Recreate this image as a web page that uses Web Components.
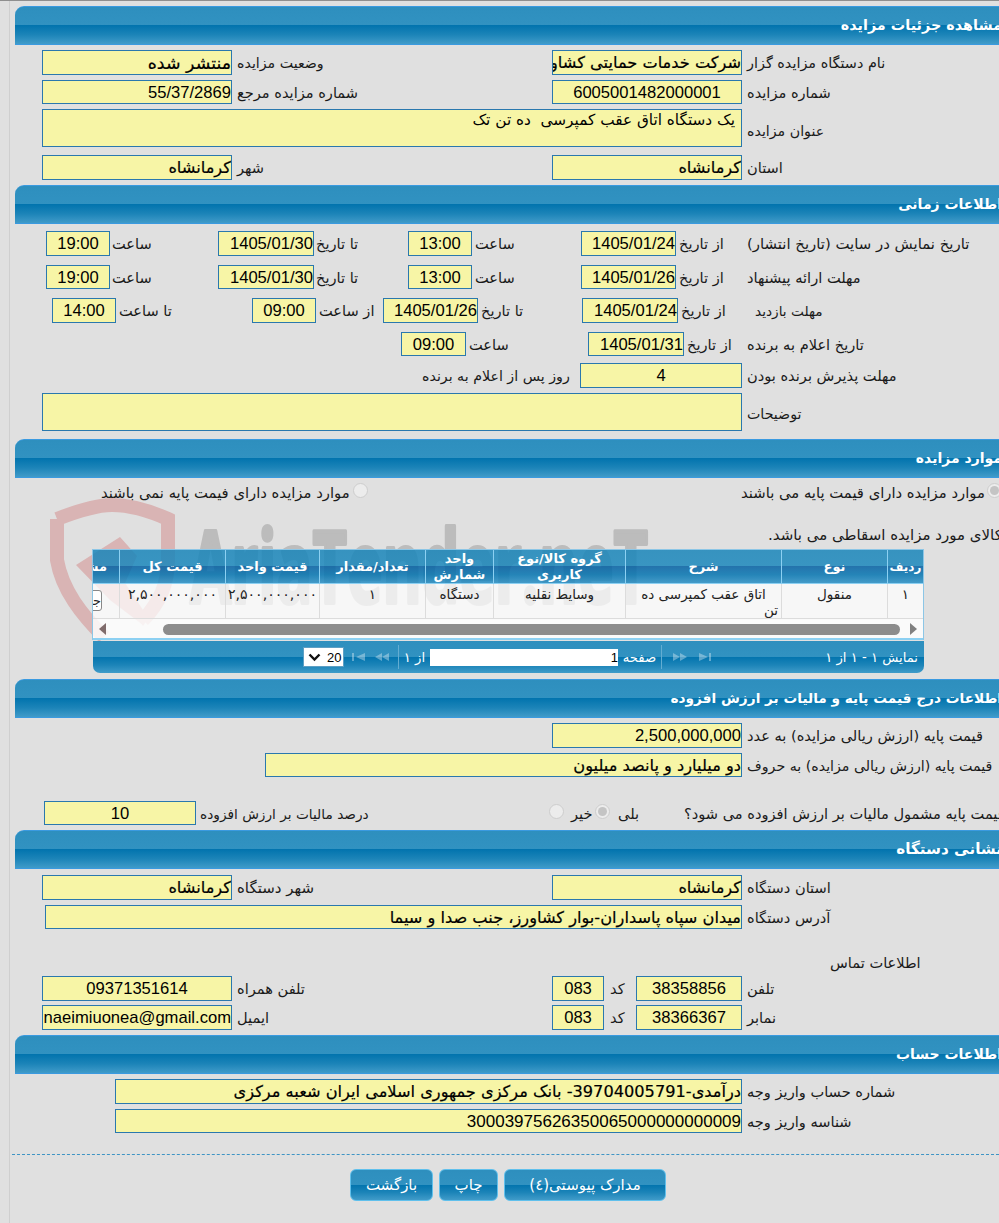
<!DOCTYPE html>
<html lang="fa">
<head>
<meta charset="utf-8">
<title>مشاهده جزئیات مزایده</title>
<style>
html,body{margin:0;padding:0;background:#e0e0e0;overflow:hidden;height:1223px}
body{font:14px "DejaVu Sans","Liberation Sans",sans-serif;color:#1a1a1a}
</style>
</head>
<body>
<x-page>
  <x-watermark slot="back"></x-watermark>

  <x-section title="مشاهده جزئیات مزایده" style="--ts:14.4px">
    <x-row top="5" h="25" pad="42">
      <x-input w="190" class="fa" style="font-size:17.4px">منتشر شده</x-input><x-label w="320" style="font-size:14.2px">وضعیت مزایده</x-label>
      <x-input w="190" class="fa">شرکت خدمات حمایتی کشاورزی</x-input><x-label w="320" style="font-size:14.4px">نام دستگاه مزایده گزار</x-label>
    </x-row>
    <x-row top="5" h="24" pad="42">
      <x-input w="190">55/37/2869</x-input><x-label w="320">شماره مزایده مرجع</x-label>
      <x-input w="190" center>6005001482000001</x-input><x-label w="320">شماره مزایده</x-label>
    </x-row>
    <x-row top="5" h="38" pad="42">
      <x-input w="700" area>یک دستگاه اتاق عقب کمپرسی  ده تن تک</x-input><x-label w="320" style="line-height:44px;font-size:14.2px">عنوان مزایده</x-label>
    </x-row>
    <x-row top="8" h="25" pad="42">
      <x-input w="190" class="fa">کرمانشاه</x-input><x-label w="320">شهر</x-label>
      <x-input w="190" class="fa">کرمانشاه</x-input><x-label w="320">استان</x-label>
    </x-row>
  </x-section>

  <x-section title="اطلاعات زمانی" style="--after:8px">
    <x-row top="7" h="25" pad="46">
      <x-input w="64" center>19:00</x-input><x-label w="108" gap="2">ساعت</x-label>
      <x-input w="96">1405/01/30</x-input><x-label w="94" gap="2">تا تاریخ</x-label>
      <x-input w="64" center>13:00</x-input><x-label w="109" gap="3">ساعت</x-label>
      <x-input w="95">1405/01/24</x-input><x-label w="71" gap="3">از تاریخ</x-label>
      <x-label w="320" gap="0" style="font-size:14.9px">تاریخ نمایش در سایت (تاریخ انتشار)</x-label>
    </x-row>
    <x-row top="9" h="24" pad="46">
      <x-input w="64" center>19:00</x-input><x-label w="108" gap="2">ساعت</x-label>
      <x-input w="96">1405/01/30</x-input><x-label w="94" gap="2">تا تاریخ</x-label>
      <x-input w="64" center>13:00</x-input><x-label w="109" gap="3">ساعت</x-label>
      <x-input w="95">1405/01/26</x-input><x-label w="71" gap="3">از تاریخ</x-label>
      <x-label w="320" gap="0">مهلت ارائه پیشنهاد</x-label>
    </x-row>
    <x-row top="9" h="25" pad="52">
      <x-input w="64" center>14:00</x-input><x-label w="136" gap="3">تا ساعت</x-label>
      <x-input w="64" center>09:00</x-input><x-label w="67" gap="3">از ساعت</x-label>
      <x-input w="95">1405/01/26</x-input><x-label w="104" gap="3">تا تاریخ</x-label>
      <x-input w="96">1405/01/24</x-input><x-label w="73" gap="3">از تاریخ</x-label>
      <x-label w="320" gap="4" style="font-size:13.7px">مهلت بازدید</x-label>
    </x-row>
    <x-row top="9" h="24" pad="401">
      <x-input w="65" center>09:00</x-input><x-label w="122" gap="3">ساعت</x-label>
      <x-input w="96">1405/01/31</x-input><x-label w="63" gap="3">از تاریخ</x-label>
      <x-label w="320" gap="0">تاریخ اعلام به برنده</x-label>
    </x-row>
    <x-row top="7" h="25" pad="422">
      <x-label w="158" gap="0" style="font-size:14.2px">روز پس از اعلام به برنده</x-label>
      <x-input w="162" center>4</x-input><x-label w="320">مهلت پذیرش برنده بودن</x-label>
    </x-row>
    <x-row top="5" h="38" pad="42">
      <x-input w="700" area></x-input><x-label w="320" style="line-height:42px;font-size:14.2px">توضیحات</x-label>
    </x-row>
  </x-section>

  <x-section title="موارد مزایده" style="--after:6px">
    <x-row top="3" h="20" pad="101">
      <x-label w="252" gap="0" style="font-size:14.8px;line-height:24px">موارد مزایده دارای فیمت پایه نمی باشند</x-label><x-radio style="margin-top:2px"></x-radio>
      <x-label w="373" gap="0"></x-label>
      <x-label w="246" gap="0" style="font-size:14.8px;line-height:24px">موارد مزایده دارای قیمت پایه می باشند</x-label><x-radio checked style="margin-top:2px"></x-radio>
    </x-row>
    <x-row top="22" h="24" pad="768">
      <x-label w="300" gap="0" style="font-size:15px;line-height:24px">کالای مورد مزایده اسقاطی می باشد.</x-label>
    </x-row>
    <x-grid></x-grid>
  </x-section>

  <x-section title="اطلاعات درج قیمت پایه و مالیات بر ارزش افزوده" style="--ts:13.7px">
    <x-row top="5" h="25" pad="552">
      <x-input w="190">2,500,000,000</x-input><x-label w="320">قیمت پایه (ارزش ریالی مزایده) به عدد</x-label>
    </x-row>
    <x-row top="5" h="24" pad="265">
      <x-input w="477" class="fa">دو میلیارد و پانصد میلیون</x-input><x-label w="320" style="font-size:14.2px">قیمت پایه (ارزش ریالی مزایده) به حروف</x-label>
    </x-row>
    <x-row top="24" h="24" pad="44">
      <x-input w="152" center>10</x-input><x-label w="353" gap="4" style="font-size:13.7px">درصد مالیات بر ارزش افزوده</x-label>
      <x-radio style="margin-top:3px"></x-radio><x-label w="31" gap="7">خیر</x-label><x-radio checked style="margin-top:3px"></x-radio>
      <x-label w="74" gap="8">بلی</x-label>
      <x-label w="330" gap="0">قیمت پایه مشمول مالیات بر ارزش افزوده می شود؟</x-label>
    </x-row>
  </x-section>

  <x-section title="نشانی دستگاه" style="--ts:15.200px">
    <x-row top="6" h="25" pad="42">
      <x-input w="190" class="fa">کرمانشاه</x-input><x-label w="320" style="font-size:15px">شهر دستگاه</x-label>
      <x-input w="190" class="fa">کرمانشاه</x-input><x-label w="320">استان دستگاه</x-label>
    </x-row>
    <x-row top="5" h="24" pad="45">
      <x-input w="697" class="fa">میدان سپاه پاسداران-بوار کشاورز، جنب صدا و سیما</x-input><x-label w="320">آدرس دستگاه</x-label>
    </x-row>
    <x-row top="21" h="26" pad="830">
      <x-label w="92" gap="0">اطلاعات تماس</x-label>
    </x-row>
    <x-row top="0" h="25" pad="42">
      <x-input w="190" center>09371351614</x-input><x-label w="320">تلفن همراه</x-label>
      <x-input w="52" center>083</x-input><x-label w="32" gap="6">کد</x-label>
      <x-input w="106" center>38358856</x-input><x-label w="320">تلفن</x-label>
    </x-row>
    <x-row top="4" h="25" pad="42">
      <x-input w="190">naeimiuonea@gmail.com</x-input><x-label w="320">ایمیل</x-label>
      <x-input w="52" center>083</x-input><x-label w="32" gap="6">کد</x-label>
      <x-input w="106" center>38366367</x-input><x-label w="320">نمابر</x-label>
    </x-row>
  </x-section>

  <x-section title="اطلاعات حساب">
    <x-row top="5" h="25" pad="115">
      <x-input w="627" class="fa">درآمدی-39704005791- بانک مرکزی جمهوری اسلامی ایران شعبه مرکزی</x-input><x-label w="320">شماره حساب واریز وجه</x-label>
    </x-row>
    <x-row top="5" h="24" pad="115">
      <x-input w="627" style="font-size:17px">30003975626350065000000000009</x-input><x-label w="320">شناسه واریز وجه</x-label>
    </x-row>
  </x-section>

  <x-actions>
    <x-btn w="83">بازگشت</x-btn>
    <x-btn w="59">چاپ</x-btn>
    <x-btn w="162">مدارک پیوستی(٤)</x-btn>
  </x-actions>
</x-page>

<script>
const GRAD='linear-gradient(#2e8fbe 0,#3192c1 49%,#0274ae 50%,#1c84b8 75%,#409bc9 100%)';
const GRADA='linear-gradient(rgba(22,132,185,.84) 0,rgba(25,135,188,.84) 49%,rgba(0,95,163,.84) 50%,rgba(1,115,176,.84) 75%,rgba(38,142,196,.84) 100%)';
function tpl(css,html){const t=document.createElement('template');t.innerHTML='<style>'+css+'</style>'+html;return t;}
function def(name,css,html,setup){
  const t=tpl(css,html);
  customElements.define(name,class extends HTMLElement{
    constructor(){super();this.attachShadow({mode:'open'}).appendChild(t.content.cloneNode(true));}
    connectedCallback(){if(setup)setup.call(this,this.shadowRoot);}
  });
}
def('x-page',`
  :host{display:block;position:relative;width:999px;height:1223px;overflow:hidden;background:#e0e0e0;border-top:1px solid #8f8f8f;box-sizing:border-box;padding-top:5px}
  .rule{position:absolute;left:9px;top:0;bottom:0;width:1px;background:#cfcfcf}
  .main{position:relative;z-index:1}
`,`<div class="rule"></div><slot name="back"></slot><div class="main"><slot></slot></div>`);

def('x-watermark',`
  :host{position:absolute;left:0;top:-1px;width:999px;height:1223px;z-index:0}
  svg{position:absolute;left:0;top:0}
  text{font:bold 100px "Open Sans","Liberation Sans",sans-serif;fill:#bcbcbc;stroke:#bcbcbc;stroke-width:4;stroke-linejoin:round}
`,`<svg width="999" height="1223" viewBox="0 0 999 1223">
  <path d="M57 519C80 510 98 505 112 505C128 505 150 511 168 519L168 560C168 585 158 605 143 620" fill="none" stroke="#d9b4b4" stroke-width="14"/>
  <path d="M57 519L57 560C62 590 82 615 104 637" fill="none" stroke="#d9b4b4" stroke-width="14"/>
  <path d="M76 565L120 537L137 556L122 590L143 625L110 600Z" fill="#d9b4b4"/>
  <path d="M125 583L143 610L160 585L167 590L143 626L120 590Z" fill="#d9b4b4"/>
  <text x="190" y="603" textLength="458" lengthAdjust="spacingAndGlyphs" dir="ltr">AriaTender.neT</text>
</svg>`);

def('x-section',`
  :host{display:block;width:1010px;padding-bottom:var(--after,5px);margin-left:15px}
  .h{height:39px;box-sizing:border-box;background:${GRAD};border-top:1px solid #3a9ae0;border-bottom:1px solid #3a9ae0;border-top-left-radius:9px;width:990px;overflow:hidden;color:#fff;font:bold var(--ts,14px) "DejaVu Sans",sans-serif;direction:rtl;text-align:right;padding:8px 3px 0 0;line-height:20px;white-space:nowrap}
  .b{margin-left:-15px}
`,`<div class="h"></div><div class="b"><slot></slot></div>`,function(r){r.querySelector('.h').textContent=this.getAttribute('title');});

def('x-row',`
  :host{display:flex;flex-direction:row;direction:ltr;align-items:stretch;width:1300px}
`,`<slot></slot>`,function(){
  this.style.marginTop=(this.getAttribute('top')||0)+'px';
  this.style.height=(this.getAttribute('h')||25)+'px';
  this.style.paddingLeft=(this.getAttribute('pad')||0)+'px';
});

def('x-input',`
  :host{display:block;flex:none;box-sizing:border-box;background:#f7f5a6;border:1px solid #2a78ae;font:16.6px "Liberation Sans","DejaVu Sans",sans-serif;color:#000;overflow:hidden}
  :host(.fa){font:16.2px "DejaVu Sans",sans-serif;-webkit-text-stroke:.2px #000}
  .t{display:block;direction:rtl;text-align:right;white-space:pre;line-height:24px;padding-right:0}
  :host([center]) .t{text-align:center;direction:ltr}
  :host([area]) .t{font:15.3px "DejaVu Sans",sans-serif;line-height:20px;padding-right:6px}
`,`<span class="t"><slot></slot></span>`,function(){this.style.width=this.getAttribute('w')+'px';});

def('x-label',`
  :host{display:block;flex:none;box-sizing:border-box;direction:rtl;text-align:left;white-space:nowrap;font:14.6px "DejaVu Sans",sans-serif;color:#1a1a1a;line-height:26px}
`,`<slot></slot>`,function(){
  this.style.width=this.getAttribute('w')+'px';
  const g=this.getAttribute('gap');this.style.paddingLeft=(g===null?5:g)+'px';
});

def('x-radio',`
  :host{display:block;flex:none;width:15px;height:15px;box-sizing:border-box;border:1px solid #cdcdcd;border-radius:50%;background:#ececec;position:relative}
  :host([checked])::after{content:"";position:absolute;inset:2px;border-radius:50%;background:#c4c4c4}
`,``);

def('x-grid',`
  :host{display:block;margin:2px 0 0 92px;width:832px;position:relative;font:13.5px "DejaVu Sans",sans-serif;color:#222}
  .box{border:1px solid #8cc6e6;border-bottom:0;overflow:hidden;box-sizing:border-box;width:832px}
  .g{display:grid;direction:rtl;grid-template-columns:36px 106px 156px 132px 68px 106px 94px 106px 26px}
  .hd{background:${GRADA};height:34px;color:#fff;font-weight:bold;font-size:13px;border-bottom:1px solid #8cd0f2;box-sizing:border-box;grid-template-rows:33px}
  .hd>div{border-left:1px solid #8cd0f2;display:flex;align-items:center;justify-content:center;text-align:center;line-height:16px;overflow:hidden;white-space:nowrap}
  .hd>div.w{white-space:normal}
  .hd>div.s{font-size:12px}
  .hd>div:last-child{border-left:0;justify-content:flex-start;padding-right:12px;margin-left:-1px}
  .rw{height:35px;background:rgba(255,255,255,.72);border-bottom:1px solid #dcdcdc;box-sizing:border-box;grid-template-rows:34px}
  .rw>div{border-left:1px solid #dcdcdc;text-align:center;padding-top:1px;line-height:18px;overflow:hidden}
  .rw>div:last-child{border-left:0}
  .rw>div.num{white-space:nowrap;font-size:14.1px}
  .end{display:block;text-align:right;padding-right:3px;line-height:15px}
  .sb{height:21px;background:rgba(255,255,255,.82);position:relative;border-bottom:2px solid #8cd0f2;box-sizing:border-box;display:flex;align-items:center;justify-content:space-between;padding:0 6px}
  .thumb{position:absolute;left:70px;top:5px;width:737px;height:11px;border-radius:6px;background:#8c8c8c}
  .tri{width:0;height:0;border-top:6.5px solid transparent;border-bottom:6.5px solid transparent}
  .tri.l{border-right:7px solid #7f6b6b}
  .tri.r{border-left:7px solid #808080}
  .clip{width:10px;overflow:hidden;height:21px;margin-top:5px;position:relative;margin-left:-1px}
  .clip span{position:absolute;right:0;top:0;width:28px;height:21px;box-sizing:border-box;border:1px solid #888;border-radius:3px;background:#fff;direction:rtl;line-height:19px;font-size:13px}
  .pg{margin:1px 0 0 1px;height:32px;width:831px;box-sizing:border-box;background:${GRAD};border-radius:0 0 7px 7px;color:#fff;display:flex;direction:rtl;align-items:center;font-size:13.2px}
  .sum{width:213px;padding-right:6px;box-sizing:border-box;white-space:nowrap;flex:none}
  .sep{width:1px;height:24px;background:#63add2;flex:none}
  .ic{opacity:.35;flex:none;display:block}
  .pl{flex:none;text-align:center}
  .in{flex:none;width:188px;height:17px;background:#fff;color:#000;font:13px "Liberation Sans",sans-serif;line-height:18px;text-align:right;direction:rtl}
  .sel{flex:none;width:41px;height:20px;background:#fff;border:1px solid #5d9fc4;box-sizing:border-box;color:#000;display:flex;direction:ltr;align-items:center;gap:6px;padding-left:4px;font:13px "Liberation Sans",sans-serif}
`,`<div class="box">
  <div class="g hd">
    <div class="s">ردیف</div><div>نوع</div><div>شرح</div><div class="w">گروه کالا/نوع کاربری</div><div class="w">واحد شمارش</div><div>تعداد/مقدار</div><div>قیمت واحد</div><div>قیمت کل</div><div>مشاهده</div>
  </div>
  <div class="g rw">
    <div>۱</div><div>منقول</div><div>اتاق عقب کمپرسی ده<span class="end">تن</span></div><div>وسایط نقلیه</div><div>دستگاه</div><div>۱</div><div class="num">۲,۵۰۰,۰۰۰,۰۰۰</div><div class="num">۲,۵۰۰,۰۰۰,۰۰۰</div><div style="display:flex;justify-content:flex-end"><div class="clip"><span>جزئیات</span></div></div>
  </div>
  <div class="sb"><div class="tri l"></div><div class="thumb"></div><div class="tri r"></div></div>
</div>
<div class="pg">
  <div class="sum">نمایش ۱ - ۱ از ۱</div>
  <svg class="ic" width="12" height="8" viewBox="0 0 12 8"><path d="M0 0l9 4-9 4zM10 0h2v8h-2z" fill="#fff"/></svg>
  <div style="width:12px;flex:none"></div>
  <svg class="ic" width="14" height="8" viewBox="0 0 14 8"><path d="M0 0l7 4-7 4zM7 0l7 4-7 4z" fill="#fff"/></svg>
  <div style="width:11px;flex:none"></div>
  <div class="sep"></div>
  <div class="pl" style="width:43px">صفحه</div><div class="in">1</div><div class="pl" style="width:31px">از ۱</div>
  <div class="sep"></div>
  <div style="width:9px;flex:none"></div>
  <svg class="ic" width="14" height="8" viewBox="0 0 14 8"><path d="M14 0L7 4l7 4zM7 0L0 4l7 4z" fill="#fff"/></svg>
  <div style="width:10px;flex:none"></div>
  <svg class="ic" width="13" height="8" viewBox="0 0 13 8"><path d="M13 0L4 4l9 4zM0 0h2v8H0z" fill="#fff"/></svg>
  <div style="width:8px;flex:none"></div>
  <div class="sel"><svg width="13" height="9" viewBox="0 0 13 9"><path d="M1.500 1.500L6.500 6.500l5-5" fill="none" stroke="#111" stroke-width="2.400"/></svg><span>20</span></div>
</div>`);

def('x-actions',`
  :host{display:block;margin:16px 0 0 12px;width:987px;border-top:1px dashed #3f94c4;padding:14px 0 0 338px;box-sizing:border-box;height:60px}
  .w{display:flex;gap:6px;direction:ltr}
`,`<div class="w"><slot></slot></div>`);

def('x-btn',`
  :host{display:block;flex:none;height:32px;box-sizing:border-box;background:${GRAD};border:1px solid #60c0ec;border-radius:6px;color:#fff;font:15px "DejaVu Sans",sans-serif;text-align:center;line-height:30px;direction:rtl}
`,`<slot></slot>`,function(){this.style.width=this.getAttribute('w')+'px';});
</script>
</body>
</html>
